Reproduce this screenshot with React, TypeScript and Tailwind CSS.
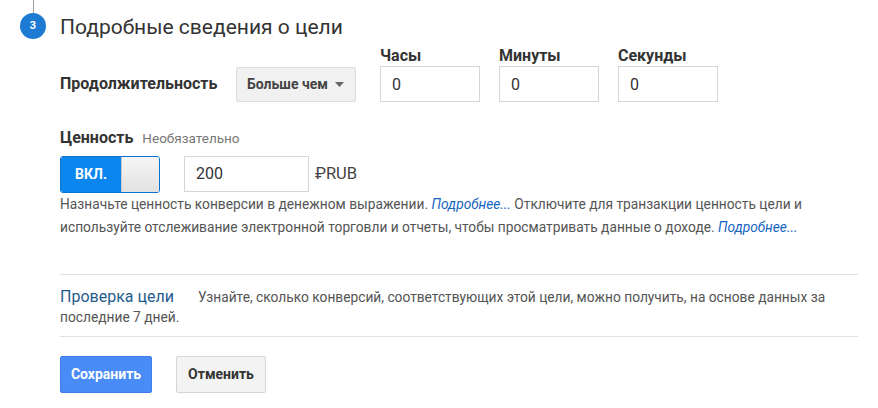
import React from 'react';

const font = { fontFamily: 'Roboto, "Liberation Sans", sans-serif' };

function TimeField({ label }: { label: string }) {
  return (
    <div className="flex flex-col">
      <span className="text-[16px] font-bold leading-[18px] text-[#333] mb-[1px]">{label}</span>
      <input
        defaultValue="0"
        className="w-[100px] h-[36px] border border-[#d6d6d6] px-[11px] text-[16px] text-[#333] outline-none"
      />
    </div>
  );
}

export default function App() {
  return (
    <div className="w-[878px] h-[408px] bg-white flex" style={font}>
      {/* шаг */}
      <div className="w-[60px] flex flex-col items-center pl-[6px] shrink-0">
        <div className="w-px h-[13px] bg-[#9e9e9e]" />
        <div className="w-[26px] h-[26px] rounded-full bg-[#1e7bd3] text-white text-[11px] font-bold flex items-center justify-center">
          3
        </div>
      </div>

      <div className="flex-1 pr-[20px]">
        <h2 className="mt-[14px] text-[21px] leading-[26px] text-[#333]">Подробные сведения о цели</h2>

        {/* Продолжительность */}
        <div className="flex items-end mt-[7px]">
          <div className="w-[176px] h-[36px] flex items-center text-[16px] font-bold text-[#333]">
            Продолжительность
          </div>
          <div className="w-[120px] h-[35px] border border-[#dcdcdc] rounded-[2px] bg-[#f1f1f1] flex items-center pl-[10px] pr-[11px] justify-between">
            <span className="text-[14px] font-bold text-[#444]">Больше чем</span>
            <svg width="9" height="5" viewBox="0 0 9 5">
              <path d="M0 0h9L4.5 5z" fill="#666" />
            </svg>
          </div>
          <div className="flex gap-[19px] ml-[24px]">
            <TimeField label="Часы" />
            <TimeField label="Минуты" />
            <TimeField label="Секунды" />
          </div>
        </div>

        {/* Ценность */}
        <div className="mt-[24px] flex items-baseline gap-[9px]">
          <span className="text-[16px] font-bold text-[#333]">Ценность</span>
          <span className="text-[13.5px] text-[#777]">Необязательно</span>
        </div>
        <div className="flex items-center mt-[6px]">
          <div className="w-[100px] h-[37px] rounded-[3px] border border-[#0a72cf] flex overflow-hidden">
            <div className="w-[60px] bg-[#0c86ef] flex items-center justify-center text-white text-[14px] font-bold">
              ВКЛ.
            </div>
            <div className="flex-1 bg-gradient-to-b from-[#f6f6f6] to-[#e2e2e2] border-l border-[#c8c8c8]" />
          </div>
          <input
            defaultValue="200"
            className="ml-[24px] w-[125px] h-[36px] -mt-[2px] border border-[#d6d6d6] px-[11px] text-[16px] text-[#333] outline-none"
          />
          <span className="ml-[6px] text-[16.5px] text-[#444]">₽RUB</span>
        </div>
        <p className="text-[13.75px] leading-[23px] text-[#555]">
          Назначьте ценность конверсии в денежном выражении.{' '}
          <a className="italic text-[#1565c0]">Подробнее...</a> Отключите для транзакции ценность цели и
          используйте отслеживание электронной торговли и отчеты, чтобы просматривать данные о доходе.{' '}
          <a className="italic text-[#1565c0]">Подробнее...</a>
        </p>

        {/* Проверка цели */}
        <div className="mt-[35px] border-t border-[#e0e0e0] border-b pb-[9px] pt-[12px]">
          <p className="text-[13.75px] leading-[20px] text-[#555]">
            <span className="text-[16px] leading-[20px] text-[#1f5b8e] mr-[24px]">Проверка цели</span>
            Узнайте, сколько конверсий, соответствующих этой цели, можно получить, на основе данных за
            последние 7 дней.
          </p>
        </div>

        <div className="flex gap-[24px] mt-[19px]">
          <button className="w-[92px] h-[37px] rounded-[2px] bg-[#4a8cf7] border border-[#3f7fe6] text-white text-[14px] font-bold">
            Сохранить
          </button>
          <button className="w-[90px] h-[37px] rounded-[2px] bg-[#f3f3f3] border border-[#d6d6d6] text-[#333] text-[14px] font-bold">
            Отменить
          </button>
        </div>
      </div>
    </div>
  );
}
